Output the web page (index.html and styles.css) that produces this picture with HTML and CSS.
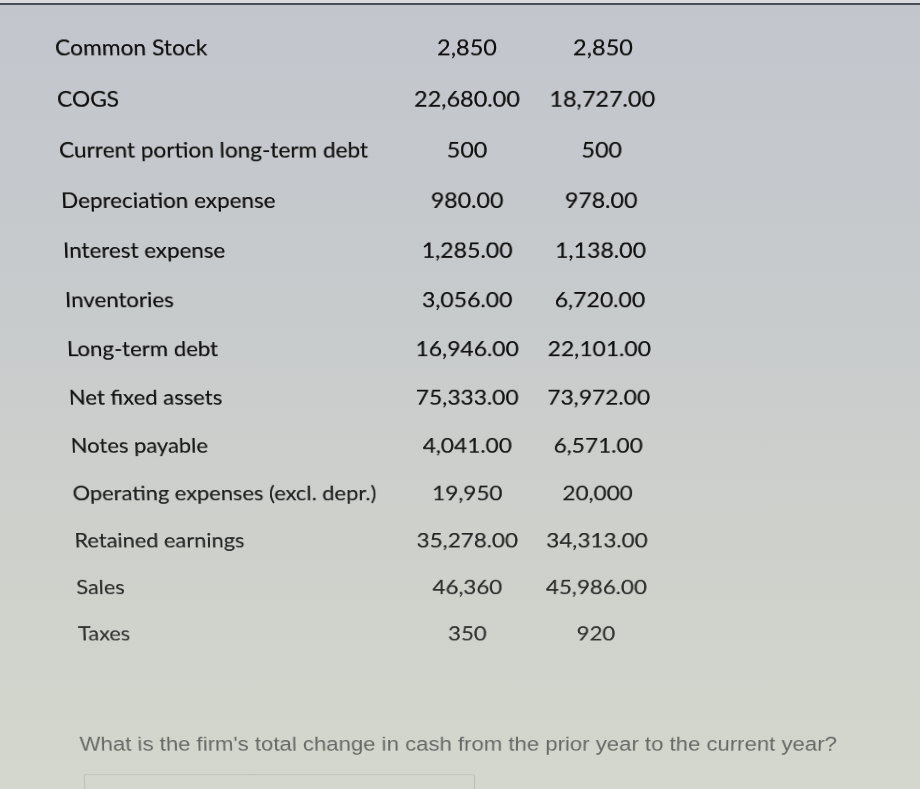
FILE: index.html
```html
<!DOCTYPE html>
<html lang="en">
<head>
<meta charset="utf-8">
<title>Cash flow data</title>
<link rel="stylesheet" href="styles.css">
</head>
<body>
<div class="screen-edge"></div>
<main class="sheet">
  <div class="data">
    <div class="row"><span class="label">Common Stock</span><span class="val">2,850</span><span class="val">2,850</span></div>
    <div class="row"><span class="label">COGS</span><span class="val">22,680.00</span><span class="val">18,727.00</span></div>
    <div class="row"><span class="label">Current portion long-term debt</span><span class="val">500</span><span class="val">500</span></div>
    <div class="row"><span class="label">Depreciation expense</span><span class="val">980.00</span><span class="val">978.00</span></div>
    <div class="row"><span class="label">Interest expense</span><span class="val">1,285.00</span><span class="val">1,138.00</span></div>
    <div class="row"><span class="label">Inventories</span><span class="val">3,056.00</span><span class="val">6,720.00</span></div>
    <div class="row"><span class="label">Long-term debt</span><span class="val">16,946.00</span><span class="val">22,101.00</span></div>
    <div class="row"><span class="label">Net fixed assets</span><span class="val">75,333.00</span><span class="val">73,972.00</span></div>
    <div class="row"><span class="label">Notes payable</span><span class="val">4,041.00</span><span class="val">6,571.00</span></div>
    <div class="row"><span class="label">Operating expenses (excl. depr.)</span><span class="val">19,950</span><span class="val">20,000</span></div>
    <div class="row"><span class="label">Retained earnings</span><span class="val">35,278.00</span><span class="val">34,313.00</span></div>
    <div class="row"><span class="label">Sales</span><span class="val">46,360</span><span class="val">45,986.00</span></div>
    <div class="row"><span class="label">Taxes</span><span class="val">350</span><span class="val">920</span></div>
  </div>
  <p class="question">What is the firm's total change in cash from the prior year to the current year?</p>
  <div class="answer"></div>
</main>
</body>
</html>
```
FILE: styles.css
```css
html, body {
  margin: 0;
  padding: 0;
}
body {
  width: 920px;
  height: 789px;
  overflow: hidden;
  background: linear-gradient(to bottom, #c2c5cc 0%, #c8cbcc 40%, #cfd2cb 75%, #d4d7cd 100%);
  font-family: Lato, "Liberation Sans", sans-serif;
}
.screen-edge {
  height: 3px;
  background: #d8dadf;
  border-bottom: 2px solid #4a4e57;
}
.sheet {
  padding: 14px 0 0 0;
  transform-origin: 475px 41px;
  transform: perspective(3878px) rotateX(-20deg);
  -webkit-mask-image: linear-gradient(to bottom, #000 0%, #000 45%, rgba(0,0,0,0.68) 100%);
  mask-image: linear-gradient(to bottom, #000 0%, #000 45%, rgba(0,0,0,0.68) 100%);
}
.data {
  display: flex;
  flex-direction: column;
  color: #0e0e0e;
  text-shadow: 0 0 0.6px rgba(0,0,0,0.6);
}
.row {
  display: grid;
  grid-template-columns: 338px 124px 124px;
  column-gap: 12px;
  align-items: center;
  height: 55px;
  padding-left: 55px;
  font-size: 23.5px;
}
.label {
  white-space: nowrap;
  font-size: 22.8px;
}
.val {
  text-align: center;
}
.question {
  margin: 95px 0 0 0;
  padding-left: 52px;
  font-family: "Liberation Sans", Arial, sans-serif;
  font-size: 23.7px;
  line-height: 24px;
  color: #404040;
  white-space: nowrap;
}
.answer {
  margin: 25px 0 0 55px;
  width: 420px;
  height: 40px;
  border: 1px solid #b0b3ab;
  border-radius: 2px;
  box-sizing: border-box;
}
```
